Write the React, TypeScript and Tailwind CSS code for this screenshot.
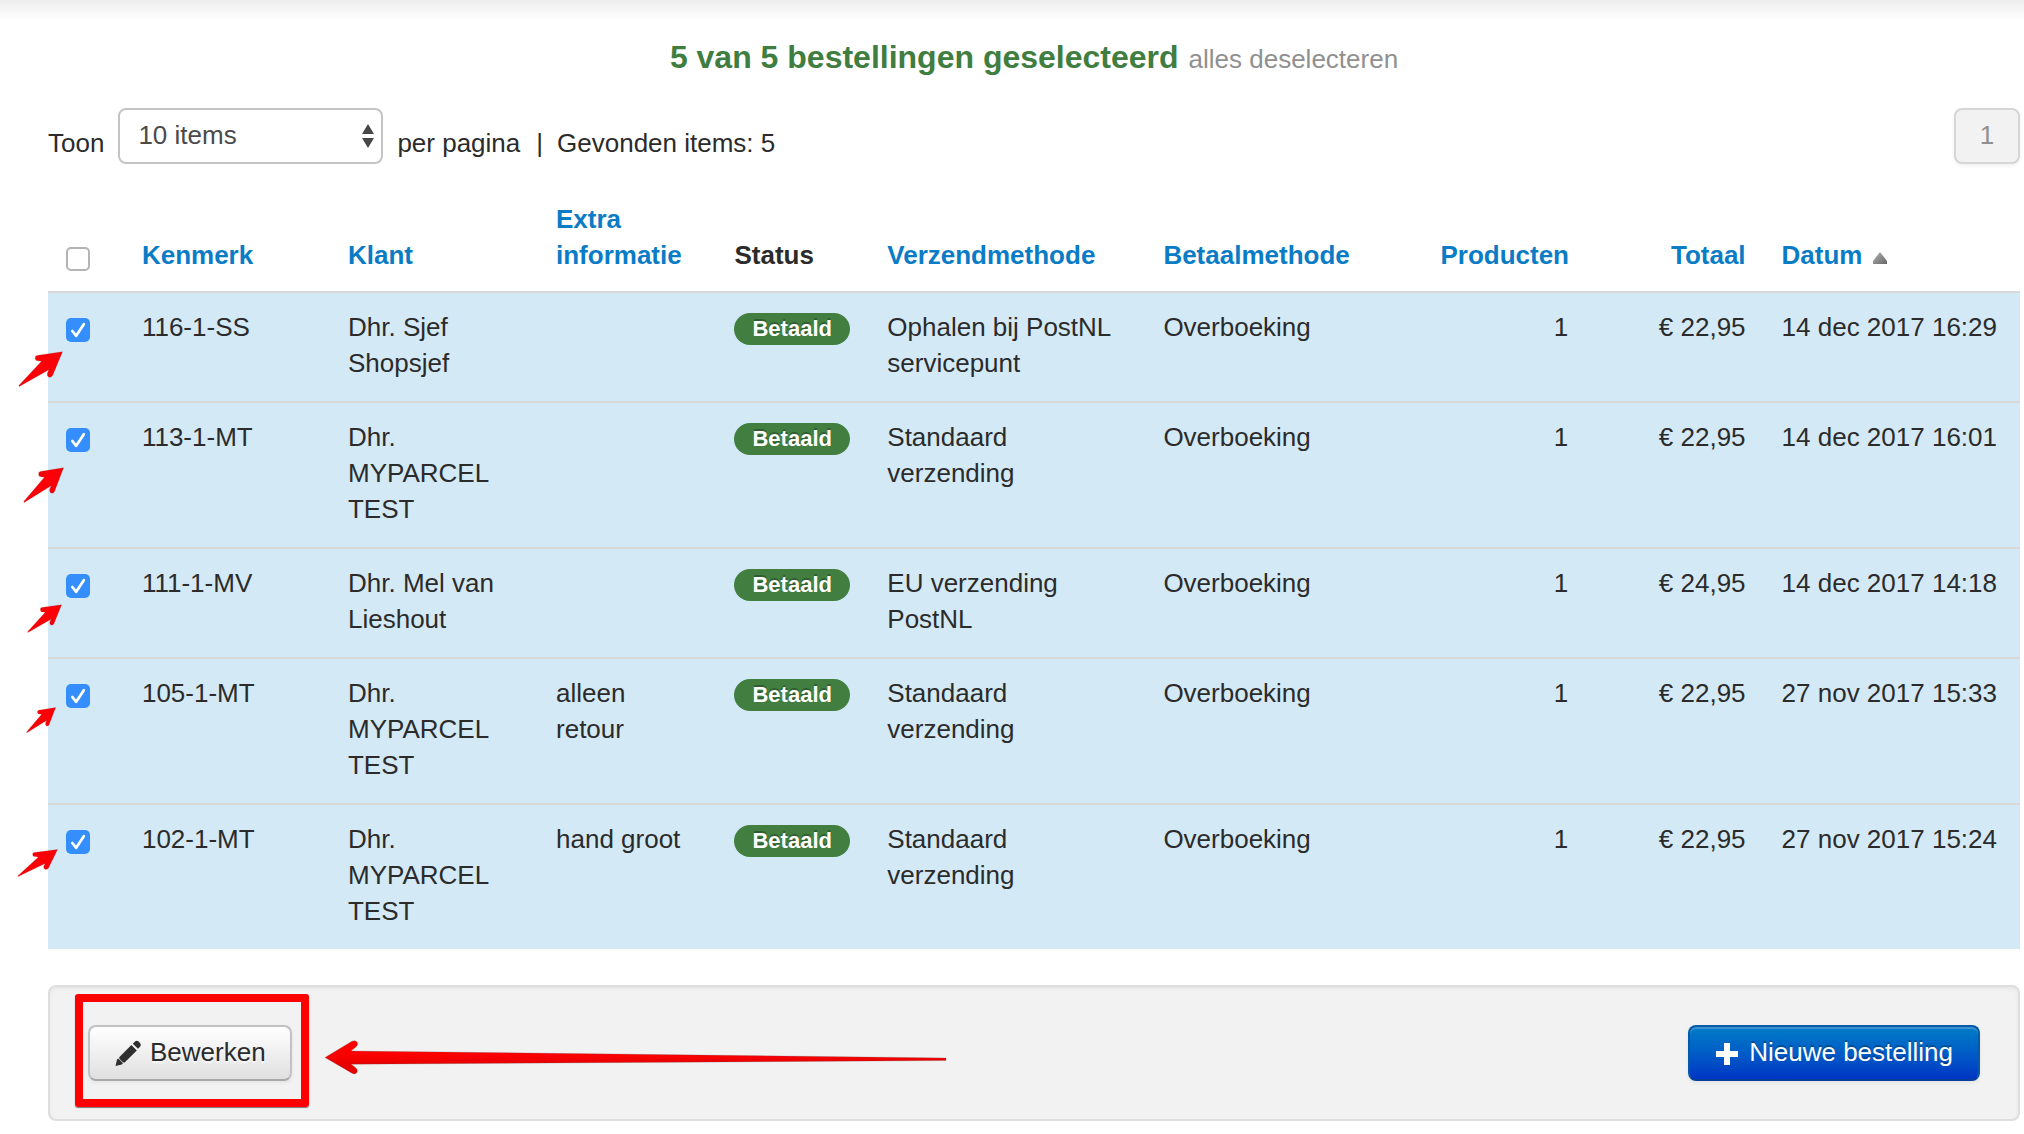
import React, { useState } from "react";

type Order = {
  ref: string;
  customer: string;
  extra: string;
  shipping: string;
  payment: string;
  products: number;
  total: string;
  date: string;
  arrow: string;
};

/* Each arrow class sets where the pointer lies over the row's checkbox cell. */
const orders: Order[] = [
  { ref: "116-1-SS", customer: "Dhr. Sjef Shopsjef", extra: "", shipping: "Ophalen bij PostNL servicepunt", payment: "Overboeking", products: 1, total: "€ 22,95", date: "14 dec 2017 16:29", arrow: "-left-[30px] top-[58px] h-[36px] w-[45px]" },
  { ref: "113-1-MT", customer: "Dhr. MYPARCEL TEST", extra: "", shipping: "Standaard verzending", payment: "Overboeking", products: 1, total: "€ 22,95", date: "14 dec 2017 16:01", arrow: "-left-[25px] top-[64px] h-[36px] w-[41px]" },
  { ref: "111-1-MV", customer: "Dhr. Mel van Lieshout", extra: "", shipping: "EU verzending PostNL", payment: "Overboeking", products: 1, total: "€ 24,95", date: "14 dec 2017 14:18", arrow: "-left-[21px] top-[55px] h-[29px] w-[35px]" },
  { ref: "105-1-MT", customer: "Dhr. MYPARCEL TEST", extra: "alleen retour", shipping: "Standaard verzending", payment: "Overboeking", products: 1, total: "€ 22,95", date: "27 nov 2017 15:33", arrow: "-left-[22px] top-[48px] h-[26px] w-[30px]" },
  { ref: "102-1-MT", customer: "Dhr. MYPARCEL TEST", extra: "hand groot", shipping: "Standaard verzending", payment: "Overboeking", products: 1, total: "€ 22,95", date: "27 nov 2017 15:24", arrow: "-left-[31px] top-[44px] h-[28px] w-[41px]" },
];

function Tick({ label, checked, onChange }: { label: string; checked: boolean; onChange: () => void }) {
  return (
    <span className="relative mt-2 grid size-6 place-items-center">
      <input
        type="checkbox"
        aria-label={label}
        checked={checked}
        onChange={onChange}
        className="peer col-start-1 row-start-1 size-6 appearance-none rounded-[5px] border-2 border-[#b4b4b4] bg-white checked:border-0 checked:bg-[#348efd]"
      />
      <svg viewBox="0 0 24 24" className="pointer-events-none invisible col-start-1 row-start-1 size-6 peer-checked:visible" aria-hidden="true">
        <path d="M6.300 13 10.200 17.800 17.800 6.200" fill="none" stroke="#fff" strokeWidth="2.700" strokeLinecap="round" strokeLinejoin="round" />
      </svg>
    </span>
  );
}

function Pointer({ className }: { className: string }) {
  return (
    <svg viewBox="0 0 44 36" preserveAspectRatio="none" className={`pointer-events-none absolute z-10 ${className}`} aria-hidden="true">
      <path d="M43.500 .8 18.500 4.400Q16.400 5 16.800 7.400 17 9.800 19.200 9.800L23 10.200 .8 34.600 1.200 35.500 30.200 18.800 28.600 22.600Q28.200 25.400 30.400 26.200 32.800 26.600 33.800 24.500Z" fill="#fb0006" stroke="#7a2a2a" strokeOpacity=".35" strokeWidth=".6" />
    </svg>
  );
}

const th = "px-[18px] py-[18px] font-bold";
const td = "px-[18px] pt-4 pb-5";

function Sort({ children }: { children: React.ReactNode }) {
  return <a href="#" className="text-[#0a7cc6]">{children}</a>;
}

export default function App() {
  const [selected, setSelected] = useState<string[]>(orders.map((o) => o.ref));
  const toggle = (ref: string) =>
    setSelected((s) => (s.includes(ref) ? s.filter((r) => r !== ref) : [...s, ref]));

  return (
    <div className="bg-white font-['Liberation_Sans',Arial,sans-serif] text-[26px] leading-9 text-[#2b2b2b]">
      <div className="h-5 bg-gradient-to-b from-[#ededed] to-white" />
      <main className="pr-1 pl-12">
        <div className="flex items-baseline justify-center gap-2.5 pt-[15px]">
          <h1 className="text-[32px] leading-[44px] font-bold text-[#3f7e40]">{selected.length} van {orders.length} bestellingen geselecteerd</h1>
          <a href="#" className="text-[#909090]">alles deselecteren</a>
        </div>

        <div className="mt-[29px] flex items-start justify-between">
          <div className="flex items-start">
            <label htmlFor="per-page" className="pt-[17px]">Toon</label>
            <div className="relative mx-3.5">
              <select id="per-page" className="block h-14 w-[265px] appearance-none rounded-lg border-2 border-[#c4c4c4] bg-white px-[18px] pb-0.5 text-[#4a4a4a]">
                <option>10 items</option>
                <option>25 items</option>
                <option>50 items</option>
              </select>
              <svg viewBox="0 0 12 24" className="pointer-events-none absolute top-4 right-[9px] h-6 w-3" aria-hidden="true">
                <path d="M6 0 12 10H0ZM6 24 0 14H12Z" fill="#474747" />
              </svg>
            </div>
            <span className="pt-[17px]">per pagina</span>
            <span className="pt-[17px] pr-3.5 pl-4">|</span>
            <span className="pt-[17px]">Gevonden items: {orders.length}</span>
          </div>
          <button type="button" disabled className="h-14 w-[66px] rounded-lg border-2 border-[#d6d6d6] bg-[#f2f2f2] pb-0.5 text-[#909090] shadow-[0_2px_4px_rgba(0,0,0,0.06)]">1</button>
        </div>

        <table className="mt-[19px] w-full table-fixed border-collapse text-left">
          <colgroup>
            <col className="w-[3.85%]" />
            <col className="w-[10.45%]" />
            <col className="w-[10.55%]" />
            <col className="w-[9.05%]" />
            <col className="w-[7.75%]" />
            <col className="w-[14%]" />
            <col className="w-[14.05%]" />
            <col className="w-[8.3%]" />
            <col className="w-[9%]" />
            <col className="w-[13%]" />
          </colgroup>
          <thead className="align-bottom">
            <tr>
              <th className="px-[18px] pb-5"><Tick label="Alles selecteren" checked={false} onChange={() => setSelected(orders.map((o) => o.ref))} /></th>
              <th className={th}><Sort>Kenmerk</Sort></th>
              <th className={th}><Sort>Klant</Sort></th>
              <th className={th}><Sort>Extra informatie</Sort></th>
              <th className={th}>Status</th>
              <th className={th}><Sort>Verzendmethode</Sort></th>
              <th className={th}><Sort>Betaalmethode</Sort></th>
              <th className={`${th} text-right`}><Sort>Producten</Sort></th>
              <th className={`${th} text-right`}><Sort>Totaal</Sort></th>
              <th className={th}>
                <Sort>
                  Datum
                  <svg viewBox="0 0 16 12" className="ml-2.5 inline-block h-3 w-4 align-baseline" aria-hidden="true">
                    <defs>
                      <linearGradient id="sort" x1="0" y1="0" x2="1" y2="1">
                        <stop offset="0" stopColor="#b5b5b5" />
                        <stop offset="1" stopColor="#666" />
                      </linearGradient>
                    </defs>
                    <path d="M8 0 15 9V12H1V9Z" fill="url(#sort)" />
                  </svg>
                </Sort>
              </th>
            </tr>
          </thead>
          <tbody className="align-top">
            {orders.map((o) => (
              <tr key={o.ref} className="border-t-2 border-[#d8d8d8] bg-[#d4e9f6]">
                <td className="relative px-[18px] pt-[17px]">
                  <Tick label={`Bestelling ${o.ref}`} checked={selected.includes(o.ref)} onChange={() => toggle(o.ref)} />
                  <Pointer className={o.arrow} />
                </td>
                <td className={td}>{o.ref}</td>
                <td className={td}>{o.customer}</td>
                <td className={td}>{o.extra}</td>
                <td className={td}>
                  <span className="mt-0.5 inline-block rounded-full bg-[#417e40] px-[18px] text-[22px] leading-8 font-bold text-white [text-shadow:0_-2px_0_rgba(0,0,0,0.25)]">Betaald</span>
                </td>
                <td className={td}>{o.shipping}</td>
                <td className={td}>{o.payment}</td>
                <td className={`${td} text-right`}>{o.products}</td>
                <td className={`${td} text-right`}>{o.total}</td>
                <td className={`${td} whitespace-nowrap`}>{o.date}</td>
              </tr>
            ))}
          </tbody>
        </table>

        <div className="mt-9 flex items-center justify-between rounded-lg border-2 border-[#dedede] bg-[#f2f2f2] px-[38px] py-[38px] shadow-[inset_0_2px_4px_rgba(0,0,0,0.05)]">
          <div className="relative">
            <button type="button" className="flex h-14 items-center gap-2 rounded-lg border-2 border-[#c2c2c2] border-b-[#a8a8a8] bg-gradient-to-b from-white to-[#e0e0e0] px-6 pb-0.5 shadow-[0_2px_4px_rgba(0,0,0,0.06)] [text-shadow:0_2px_2px_rgba(255,255,255,0.75)]">
              <svg viewBox="0 0 28 28" className="mt-0.5 size-7" aria-hidden="true">
                <path d="M1.500 27 3 20.400 4.200 19.400 9 24.200 7.800 25.400ZM5.200 18.200 17.400 6 22.800 11.400 10.600 23.600Q9.200 24 7 21.600 4.800 19.600 5.200 18.200ZM18.800 4.800 21 2.600Q22.800 1 24.600 2.600L26.200 4.200Q27.600 6 26.200 7.600L24 9.800Z" fill="#2f2f2f" />
              </svg>
              Bewerken
            </button>
            <div className="pointer-events-none absolute -top-[31px] -left-[13px] h-[113px] w-[234px] rounded-[3px] border-8 border-[#fe0000] shadow-[0_1px_1px_rgba(0,0,0,0.5)]" />
            <svg viewBox="0 0 622 36" className="pointer-events-none absolute top-[14px] left-[237px] h-9 w-[622px]" aria-hidden="true">
              <defs>
                <linearGradient id="shaft" x1="0" y1="0" x2="0" y2="1">
                  <stop offset=".4" stopColor="#fe0000" />
                  <stop offset=".7" stopColor="#e60000" />
                </linearGradient>
              </defs>
              <path d="M0 18.500 27 2.200Q31 .6 32.400 3.600 33.200 6.600 30.500 8.200L26 12 621 19V21.500L26 25.200 30.500 28.600Q33.200 31 32 33.600 30 36 27 34.200Z" fill="url(#shaft)" stroke="#555" strokeOpacity=".35" strokeWidth=".7" />
            </svg>
          </div>
          <button type="button" className="flex h-14 items-center gap-2.5 rounded-lg border-2 border-[#0659a8] border-b-[#063f9a] bg-gradient-to-b from-[#0a7cc6] to-[#0034c4] px-[25px] pb-0.5 text-white shadow-[inset_0_2px_0_rgba(255,255,255,0.2),0_2px_4px_rgba(0,0,0,0.06)] [text-shadow:0_-2px_0_rgba(0,0,0,0.25)]">
            <svg viewBox="0 0 24 24" className="mt-1 size-6" aria-hidden="true">
              <path d="M9 1H15V9H23V15H15V23H9V15H1V9H9Z" fill="#fff" />
            </svg>
            Nieuwe bestelling
          </button>
        </div>
      </main>
    </div>
  );
}
